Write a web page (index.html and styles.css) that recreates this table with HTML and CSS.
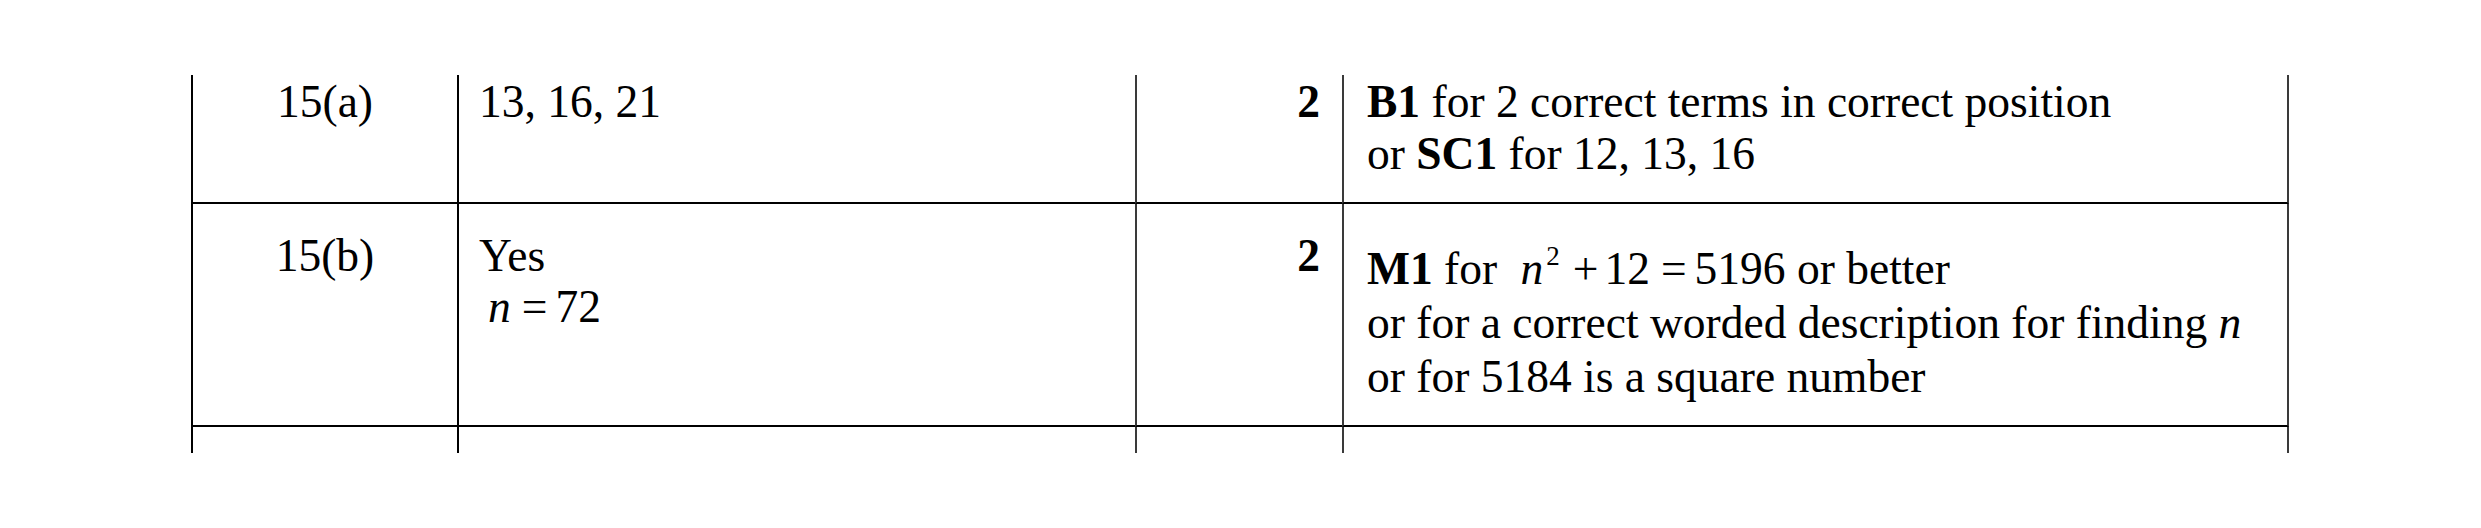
FILE: index.html
```html
<!DOCTYPE html>
<html lang="en">
<head>
<meta charset="utf-8">
<title>Mark scheme</title>
<link rel="stylesheet" href="styles.css">
</head>
<body>
<div class="sheet">
  <div class="grid">
    <div class="cell q row-a">15(a)</div>
    <div class="cell ans row-a">13, 16, 21</div>
    <div class="cell mk row-a">2</div>
    <div class="cell notes row-a"><b>B1</b> for 2 correct terms in correct position<br>or <b>SC1</b> for 12, 13, 16</div>

    <div class="cell q row-b">15(b)</div>
    <div class="cell ans row-b">Yes<br><span class="eq eq-n"><i>n</i><span class="op">=</span>72</span></div>
    <div class="cell mk row-b">2</div>
    <div class="cell notes notes-b row-b"><b>M1</b> for <span class="eq eq-m"><i>n</i><span class="sup">2</span><span class="plus">+</span>12<span class="op">=</span>5196</span> or better<br>or for a correct worded description for finding <i>n</i><br>or for 5184 is a square number</div>

    <div class="cell q row-c"></div>
    <div class="cell ans row-c"></div>
    <div class="cell mk row-c"></div>
    <div class="cell notes row-c"></div>
  </div>
</div>
</body>
</html>
```

FILE: styles.css
```css
html, body {
  margin: 0;
  padding: 0;
  background: #ffffff;
}

body {
  width: 2481px;
  height: 528px;
  overflow: hidden;
  font-family: "Liberation Serif", "Times New Roman", serif;
  font-size: 45.5px;
  color: #000000;
}

.sheet {
  padding-top: 75px;
  padding-left: 191px;
}

.grid {
  display: grid;
  grid-template-columns: 266px 678px 207px 947px;
  grid-template-rows: 129px 223px 26px;
}

.cell {
  box-sizing: border-box;
  line-height: 52px;
  white-space: nowrap;
}

.row-a {
  padding-top: 1px;
  border-bottom: 2px solid #000000;
}

.row-b {
  padding-top: 26px;
  border-bottom: 2px solid #000000;
}

.q {
  border-left: 2px solid #000000;
  text-align: center;
}

.ans {
  border-left: 2px solid #000000;
  padding-left: 20px;
}

.row-b.ans {
  line-height: 51px;
}

.mk {
  border-left: 2px solid #3a3a3a;
  text-align: right;
  padding-right: 22px;
  font-weight: bold;
}

.notes {
  border-left: 2px solid #3a3a3a;
  border-right: 2px solid #3a3a3a;
  padding-left: 23px;
}

.notes-b.row-b {
  padding-top: 38px;
  line-height: 54px;
}

.row-a.notes,
.row-b.notes {
  border-bottom-color: #000000;
}

.eq-n {
  padding-left: 9px;
}

.eq-m {
  margin-left: 12px;
}

.op {
  margin: 0 8px 0 11px;
}

.sup {
  font-size: 27px;
  line-height: 0;
  position: relative;
  top: -19px;
  margin-left: 3px;
}

.plus {
  margin: 0 6px 0 13px;
}
```
